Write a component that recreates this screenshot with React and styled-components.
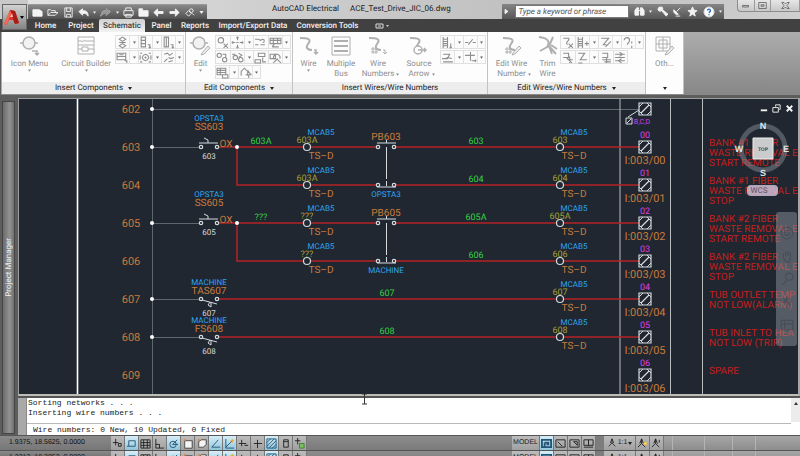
import React from "react";
import styled, { createGlobalStyle, css } from "styled-components";

const Global = createGlobalStyle`
  * { box-sizing: border-box; }
  html, body { margin: 0; height: 100%; }
  body { font-family: Roboto, "Open Sans", sans-serif; font-size: 8px; line-height: 10px; text-rendering: geometricPrecision; overflow: hidden; background: #6b6b6b; }
  button, input { font: inherit; color: inherit; text-rendering: inherit; margin: 0; padding: 0; border: 0; background: none; }
  svg { display: block; flex: none; }
`;

const Page = styled.div`
  height: 100vh;
  display: flex;
  flex-direction: column;
  background: #5e5f5e;
`;

/* ---------- header ---------- */

const Header = styled.header`
  display: grid;
  grid-template-columns: 28px 1fr;
  grid-template-rows: 19px 13px;
  background: linear-gradient(#c9c9c9 0 19px, #414141 19px);
`;

const AppButton = styled.button`
  grid-row: 1 / 3;
  margin: 4px 1px 2px 2px;
  display: flex;
  align-items: center;
  border: 1px solid #666;
  background: linear-gradient(#d2d2d2, #858585);
`;

const TitleBar = styled.div`
  display: flex;
  align-items: flex-start;
  background: linear-gradient(90deg, #e2e2e2, #cfcfcf 30%, #bebebe 70%, #cfcfcf);
`;

const QuickAccess = styled.div`
  width: 179px;
  height: 15px;
  margin-top: 4px;
  padding: 0 3px 0 4px;
  display: flex;
  align-items: center;
  justify-content: space-between;
  color: #f4f4f4;
  background: linear-gradient(#888, #505050);
  border-top: 1px solid #999;
`;

const IconButton = styled.button`
  display: flex;
  align-items: center;
  justify-content: center;
`;

const WindowTitle = styled.h1`
  flex: 1;
  display: flex;
  gap: 11px;
  margin: 3px 0 0 65px;
  font-size: 8px;
  line-height: 12px;
  font-weight: 400;
  color: #1c1c1c;
  white-space: nowrap;
`;

const SearchBar = styled.form`
  width: 222px;
  height: 15px;
  margin: 4px 13px 0 0;
  display: flex;
  align-items: center;
  justify-content: space-between;
  padding-right: 2px;
  color: #f4f4f4;
  background: linear-gradient(#858585, #565656);
`;

const SearchInput = styled.input`
  width: 114px;
  height: 13px;
  padding-left: 2px;
  border: 1px solid #777;
  background: #fdfdfd;
  color: #333;
  font-style: italic;
  &::placeholder { color: #555; opacity: 1; }
`;

const WindowControls = styled.div`
  width: 63px;
  height: 12px;
  display: flex;
  border: 1px solid #8c8c8c;
  border-top: 0;
  border-right: 0;
  border-radius: 0 0 0 4px;
  background: linear-gradient(#e6e6e6, #c8c8c8);
`;

const WindowButton = styled(IconButton)`
  width: ${(p) => p.$width}px;
  color: #555;
  border-right: 1px solid #9c9c9c;
`;

const Tabs = styled.nav`
  display: flex;
`;

const Tab = styled.button`
  width: ${(p) => p.$width}px;
  height: 13px;
  line-height: 13px;
  white-space: nowrap;
  font-weight: 500;
  color: ${(p) => (p.$active ? "#3c3c3c" : "#f2f2f2")};
  ${(p) => p.$active && css`
    border-radius: 2px 2px 0 0;
    background: linear-gradient(#d0d0d0, #f2f2f2);
  `}
`;

const RibbonToggle = styled(IconButton)`
  width: 38px;
`;

/* ---------- ribbon ---------- */

const Ribbon = styled.div`
  height: 63px;
  display: flex;
  margin-left: 1px;
  border-left: 1px solid #aaa;
  border-bottom: 1px solid #8a8a8a;
  background: linear-gradient(#adadad, #878787);
`;

const Panel = styled.section`
  width: ${(p) => p.$width}px;
  flex: none;
  display: flex;
  flex-direction: column;
  border-right: 1px solid #c2c2c2;
  background: #fdfdfd;
`;

const PanelBody = styled.div`
  flex: 1;
  display: flex;
  padding-top: 3px;
  color: #8f8f8f;
`;

const PanelTitle = styled.button`
  height: 12px;
  display: flex;
  align-items: center;
  justify-content: center;
  gap: 5px;
  color: #222;
  background: ${(p) => (p.$plain ? "#fdfdfd" : "#ededed")};
`;

const BigButtonBox = styled.button`
  width: ${(p) => p.$width}px;
  flex: none;
  display: flex;
  flex-direction: column;
  align-items: center;
  gap: 2px;
  line-height: 10px;
  white-space: nowrap;
`;

const BigLabel = styled.span`
  display: flex;
  flex-direction: column;
  align-items: center;
`;

const SideArrow = styled.span`
  display: flex;
  align-items: center;
  gap: 2px;
  margin-right: -5px;
`;

const ToolGrid = styled.div`
  display: flex;
  flex-direction: column;
  gap: 1px;
`;

const ToolRow = styled.div`
  display: flex;
`;

const ToolButton = styled.button`
  width: ${(p) => (p.$split ? 23 : 15)}px;
  height: 14px;
  display: flex;
  align-items: center;
  border: 1px solid #e0e0e0;
  border-right-width: 0;
  background: #fbfbfb;
  &:last-child { border-right-width: 1px; }
`;

const SplitArrow = styled.span`
  flex: 1;
  align-self: stretch;
  display: flex;
  align-items: center;
  justify-content: center;
  border-left: 1px solid #e4e4e4;
  color: #666;
`;

/* ---------- workspace ---------- */

const Workspace = styled.div`
  flex: 1;
  min-height: 0;
  display: grid;
  grid-template-columns: 18px 1fr;
  padding-top: 3px;
  background: #5c5d5c;
`;

const Palette = styled.aside`
  margin: 3px 3px 1px 2px;
  display: flex;
  align-items: center;
  justify-content: center;
  border: 1px solid #454545;
  background: linear-gradient(90deg, #6c6c6c, #929292 60%, #707070);
`;

const PaletteTitle = styled.span`
  writing-mode: vertical-rl;
  transform: rotate(180deg);
  color: #f0f0f0;
`;

const Main = styled.main`
  min-width: 0;
  display: flex;
  flex-direction: column;
`;

const Canvas = styled.div`
  position: relative;
  flex: 1;
  min-height: 0;
  overflow: hidden;
  border: 1px solid #9b9c9b;
  border-right: 2px solid #a5a6a5;
  border-bottom: 2px solid #bdbdb8;
  background: #202730;
`;

const Drawing = styled.svg`
  width: 100%;
  height: 100%;
  font-family: Roboto, sans-serif;
`;

const DocControls = styled.div`
  position: absolute;
  top: 4px;
  right: 3px;
  display: flex;
  gap: 2px;
  color: #f4f4f4;
`;

const ViewCube = styled.div`
  position: absolute;
  top: 18px;
  right: 6px;
`;

const WcsButton = styled.button`
  position: absolute;
  top: 86px;
  right: 20px;
  width: 31px;
  height: 11px;
  padding-right: 7px;
  border-radius: 4px;
  background: rgba(216, 200, 222, 0.8);
  color: #5d5264;
  line-height: 10px;
`;

const NavBar = styled.div`
  position: absolute;
  top: 113px;
  right: 1px;
  width: 21px;
  height: 134px;
  padding: 9px 0;
  display: flex;
  flex-direction: column;
  align-items: center;
  justify-content: space-around;
  border-radius: 3px;
  background: rgba(150, 158, 166, 0.45);
  color: rgba(60, 68, 76, 0.55);
`;

const CommandWindow = styled.section`
  height: 39px;
  display: grid;
  grid-template-columns: 8px 1fr 9px;
  border-top: 2px solid #555;
  background: #a9a9a9;
`;

const CommandText = styled.div`
  display: flex;
  flex-direction: column;
  border-left: 1px solid #888;
  background: #fff;
  color: #222;
  font-family: "Liberation Mono", monospace;
  font-size: 8px;
  text-rendering: auto;
`;

const LogLine = styled.p`
  margin: 0;
  padding-left: 1px;
  line-height: 10px;
  white-space: pre;
`;

const Prompt = styled.input`
  height: 12px;
  margin-top: 5px;
  padding-left: 6px;
  border-top: 1px solid #b9b9b9;
`;

const ScrollUp = styled(IconButton)`
  width: 100%;
  height: 24px;
  align-items: flex-start;
  padding-top: 4px;
  background: #ececec;
  color: #333;
`;

const Track = styled.div`
  background: #fff;
`;

const TextCursor = styled.svg`
  position: absolute;
  left: 342px;
  bottom: -9px;
`;

const CanvasWrap = styled.div`
  position: relative;
  flex: 1;
  min-height: 0;
  display: flex;
  flex-direction: column;
`;

/* ---------- status bar ---------- */

const StatusBox = styled.footer`
  height: ${(p) => p.$height}px;
  flex: none;
  overflow: hidden;
  display: flex;
  align-items: flex-start;
  border-top: 1px solid #555;
  background: linear-gradient(#8a8a8a, #777);
`;

const Coordinates = styled.output`
  width: 111px;
  padding-left: 9px;
  flex: none;
  line-height: 14px;
  font-family: "Liberation Sans", sans-serif;
  font-size: 7px;
  color: #111;
`;

const Toggle = styled.button`
  width: ${(p) => p.$width || 14}px;
  height: 14px;
  flex: none;
  display: flex;
  align-items: center;
  justify-content: center;
  gap: 1px;
  border-right: 1px solid #777;
  font-family: "Liberation Sans", sans-serif;
  font-size: 7px;
  color: ${(p) => (p.$on ? "#245575" : "#222")};
  background: ${(p) => (p.$on ? "linear-gradient(#d8eef8, #8fc4dd)" : "linear-gradient(#bcbcbc, #a0a0a0)")};
`;

const StatusFill = styled.div`
  flex: 1;
  height: 14px;
  background: linear-gradient(#8d8d8d, #7a7a7a);
`;

const StatusGap = styled.div`
  width: 8px;
  height: 14px;
  background: #7d7d7d;
`;

const Tray = styled.div`
  width: 136px;
  height: 14px;
  padding-left: 8px;
  display: flex;
  background: linear-gradient(#a6a6a6, #8d8d8d);
`;

const TraySlot = styled.div`
  width: ${(p) => p.$width}px;
  height: 14px;
  border-left: 1px solid #b4b4b4;
`;

/* ---------- icons ---------- */

const Arrow = ({ size = 4, up }) => (
  <svg width={size} height="3" viewBox="0 0 4 3" fill="currentColor" aria-hidden="true">
    <path d={up ? "M0 3h4L2 0z" : "M0 0h4L2 3z"} />
  </svg>
);

const Glyph = ({ d, size = 11, box = 12, width = 1, fill, children }) => (
  <svg width={size} height={size} viewBox={`0 0 ${box} ${box}`} fill="none" stroke="currentColor" strokeWidth={width} aria-hidden="true">
    {d && <path d={d} fill={fill ? "currentColor" : "none"} />}
    {children}
  </svg>
);

const small = {
  surge: "M3 3l3-2 3 2-3 2zM3 6h6M3 9l3-2 3 2-3 2z",
  panelDown: "M2 1h4v9H2zM2 4h4M2 7h4M8 8h2v3m-1-1l1 1 1-1",
  doorDown: "M2 1h4v9H2zM4 1v9M8 8h2v3m-1-1l1 1 1-1",
  listDown: "M1 2h8v6H1zM1 5h8M3 3.500h4M8 9h2v2",
  gear: "M1 2h2M9 2h2M1 10h2M9 10h2M1 4v4M11 4v4M6 3l2 1 1 2-1 2-2 1-2-1-1-2 1-2zM6 5v2M5 6h2",
  spark: "M2 3l3-1 2 2 3-2M2 10l3-3M6 6l2 1 3-1M6 10l4-1",
  erase: "M2 4a2.500 2.500 0 1 1 5 0a2.500 2.500 0 1 1-5 0M7 7l4 4M11 7l-4 4",
  move: "M6 1v3M6 8v3M1 6h3M8 6h3M5 2l1-1 1 1M5 10l1 1 1-1M2 5L1 6l1 1M10 5l1 1-1 1M5 6h2",
  chain: "M1 3h3l2 1 2-1M8 3a1.500 1.500 0 1 1 0 3M1 8h3M6 8h4",
  table: "M1 2h10v5H1zM1 4h10M4 2v5M8 2v5M3 10h6M5 7l-2 3",
  copy: "M1 4a2 2 0 1 1 4 0a2 2 0 1 1-4 0M6 3h3v3M6 8a2 2 0 1 1 4 0a2 2 0 1 1-4 0",
  swap: "M1 3h3M2 6a2 2 0 1 1 4 0a2 2 0 1 1-4 0M7 2l3 2-3 2M7 8a2 2 0 1 1 4 0a2 2 0 1 1-4 0",
  align: "M4 2h6v3H4zM1 8h5v3H1zM8 6v4h3",
  search: "M1 3h5v4H1zM5 8a3 3 0 1 1 5-1M7 7l4 4M4 11l4-4",
  grid: "M1 2h8v6H1zM1 4h8M1 6h8M4 2v6M6 8h5v3H6z",
  retag: "M2 9V5l3-3 3 3v4M8 4l3 4H6M9 8v3",
  ladder: "M2 1v10M6 1v10M2 3h4M2 5h4M2 7h4M2 9h4M9 7v4m-1-1l1 1 1-1",
  gap: "M1 6h3M8 6h3M4 8l4-5",
  bend: "M2 3h6L6 7H1M5 6l5 1M2 10h9",
  tee: "M1 4h9M6 1v8M7 9h4m-1-1l1 1-1 1",
  wave: "M2 2h5c2 2-4 4-1 6M7 7l4 4M11 7l-4 4",
  ladderAdd: "M2 1v10M6 1v10M2 3h4M2 5h4M2 7h4M2 9h4M8 7h4M10 5v4",
  brush: "M2 2h7L4 8h3M6 10l5-5",
  quest: "M2 4a2.500 2.500 0 1 1 5 0c0 2-2 2-2 4M9 5v2M9 9v2",
  fix: "M2 2h5v4H2M5 6l5 5M6 8h5M8 5v6",
  zig: "M2 2h6L4 8h6M2 11h4",
  flip: "M3 2h5v4H3M3 8h8M5 10h6M7 6v5",
  rows: "M1 3h9M1 6h9M1 9h9M5 1l3 2-3 2M7 7l-3 2 3 2",
};

const BigIcon = ({ children }) => (
  <svg width="22" height="22" viewBox="0 0 22 22" fill="none" stroke="#b0b0b0" strokeWidth="1.500" aria-hidden="true">
    {children}
  </svg>
);

const pencil = <path d="M12 18l6-7 2 2-6 6-3 1z" fill="#eee" strokeWidth="1" />;
const curve = <path d="M2 3c8 0 12 1 8 6-3 4 0 6 4 6" strokeWidth="2" />;

const big = {
  menu: <BigIcon><circle cx="10" cy="8" r="6" fill="#f2f2f2" /><path d="M1 8h3M16 8h3M13 16h5v4m-2-2l2 2 2-2" /></BigIcon>,
  builder: <BigIcon><path d="M3 2h16v17H3zM3 10h16M3 6h4m3 0h9M7 7l3-2M3 14h4m6 0h6M7 12h6v4H7z" strokeWidth="1" /></BigIcon>,
  edit: <BigIcon><circle cx="9" cy="8" r="6" fill="#f2f2f2" /><path d="M0 8h3M15 8h3" />{pencil}</BigIcon>,
  wire: <BigIcon>{curve}<path d="M16 15h2v4m-2-2l2 2 2-2" /></BigIcon>,
  bus: <BigIcon><path d="M2 2h18v18H2z" strokeWidth="1" /><path d="M4 6h14M4 11h14M4 16h14" strokeWidth="2" /></BigIcon>,
  numbers: <BigIcon>{curve}<path d="M6 12v7M9 12v7M4 14h7M4 17h7M16 15h2v4m-2-2l2 2 2-2" strokeWidth="1" /></BigIcon>,
  source: <BigIcon>{curve}<circle cx="10" cy="15" r="4" fill="#fff" /><path d="M10 15h8m-2-2l2 2-2 2" /></BigIcon>,
  editWire: <BigIcon>{curve}<path d="M6 12v7M9 12v7M4 14h7M4 17h7" strokeWidth="1" />{pencil}</BigIcon>,
  trim: <BigIcon><path d="M2 2c8 1 12 4 8 10" strokeWidth="2" /><path d="M16 2l-4 9 7 8M12 11l3 8M12 11l-9 5M14 10l6 4" strokeWidth="2" /></BigIcon>,
  other: <BigIcon><path d="M2 2h14v14H2zM9 2v14M2 9h14M5 5h8v8H5z" strokeWidth="1" />{pencil}</BigIcon>,
};

const quick = [
  ["New", "M1 3h7l3 2v5H1z", 1],
  ["Open", "M1 9V3h3l1 1h4v2M1 9l3-3h8L9 9z"],
  ["Save", "M2 1h8v10H2zM4 1v4h4V1M4 11V8h4v3"],
  ["Undo", "M1 5l4-3v2c4 0 6 1 6 6-1-3-3-3-6-3v2z", 1],
  ["Undo list", "", 2],
  ["Redo", "M11 5L7 2v2C3 4 2 5 1 10c1-3 3-3 6-3v2z", 3],
  ["Redo list", "", 2],
  ["Plot", "M3 4V1h6v3M1 4h10v5H1zM3 8h6v3H3z"],
  ["Project", "M1 2h4v2h6v6H1z", 1],
  ["Previous drawing", "M1 6l4-4v3h6v2H5v3z", 1],
  ["Next drawing", "M11 6L7 2v3H1v2h6v3z", 1],
  ["Surf", "M2 7l3-3 3 3-3 3zM6 4a2 2 0 1 1 4 0a2 2 0 1 1-4 0M9 7l2 2"],
  ["Customize", "", 4],
];

const searchIcons = [
  ["Find", "M1 10V5l2-3h2v8zM7 10V2h2l2 3v5zM5 5h2", 1],
  ["Find options", null],
  ["Subscription", "M2 2l3 3M4 1a3 3 0 0 0-3 3c1 2 3 2 4 1l5 6 2-2-6-5c1-2 0-3-2-3z", 1],
  ["Communication", "M2 4l5 5c-2 1-6-1-5-5zM5 6l4-4M4 11h5", 1],
  ["Favorites", "M6 1l1.500 3.500 3.500.5-3 2.500 1 3.500-3-2-3 2 1-3.500-3-2.500 3.500-.5z", 1],
];

/* ---------- parts ---------- */

const BigButton = ({ icon, lines, width, arrow }) => (
  <BigButtonBox $width={width} aria-label={lines.join(" ")}>
    {big[icon]}
    <BigLabel>
      {lines.map((l, i) =>
        arrow === "side" && i === lines.length - 1 ? (
          <SideArrow key={l}>{l}<Arrow size={3} /></SideArrow>
        ) : (
          <span key={l}>{l}</span>
        )
      )}
      {arrow === "below" && <Arrow size={3} />}
    </BigLabel>
  </BigButtonBox>
);

const Tools = ({ rows }) => (
  <ToolGrid>
    {rows.map((row, i) => (
      <ToolRow key={i}>
        {row.split(" ").map((name) => {
          const split = name.endsWith("+");
          const key = name.replace("+", "");
          return (
            <ToolButton key={name} $split={split} aria-label={key}>
              <Glyph d={small[key]} size={13} />
              {split && <SplitArrow><Arrow size={3} /></SplitArrow>}
            </ToolButton>
          );
        })}
      </ToolRow>
    ))}
  </ToolGrid>
);

const Txt = ({ x, y, c, s = 11, anchor = "middle", children }) => (
  <text x={x} y={y} fill={c} fontSize={s} textAnchor={anchor}>{children}</text>
);

const ORANGE = "#c97b3c", BLUE = "#2fa5f0", GREEN = "#35d243", OLIVE = "#a5a03a", MAGENTA = "#dc3fe4", RED = "#c4201e", WIRE = "#b32425", PALE = "#d4dade", DIM = "#5d676e";

const Terminal = ({ x, y, label }) => (
  <g>
    <Txt x={x} y={y - 4} c={OLIVE} s={9}>{label}</Txt>
    <circle cx={x} cy={y} r="3.500" fill="#202730" stroke={PALE} strokeWidth="1.200" />
    <Txt x={x + 14} y={y - 12} c={BLUE} s={8}>MCAB5</Txt>
    <Txt x={x + 14} y={y + 12} c={ORANGE} s={10}>TS–D</Txt>
  </g>
);

const Contacts = ({ x, y }) => (
  <g fill="#202730" stroke={PALE} strokeWidth="1.200">
    <circle cx={x - 8} cy={y} r="1.700" /><circle cx={x + 8} cy={y} r="1.700" />
  </g>
);

const Selector = ({ y, n }) => (
  <g>
    <path d={`M219 ${y}h18v38h141M237 ${y}h141`} stroke={WIRE} strokeWidth="1.500" fill="none" />
    <path d={`M199 ${y - 4}h19M208 ${y - 4}v-3l-4-2`} stroke={PALE} fill="none" />
    <Contacts x={209} y={y} />
    <circle cx="237" cy={y} r="2" fill="#fff" />
    <Txt x={209} y={y - 26} c={BLUE} s={8}>OPSTA3</Txt>
    <Txt x={209} y={y - 17} c={ORANGE} s={10}>SS{n}</Txt>
    <Txt x={226} y={y} c={ORANGE} s={10}>OX</Txt>
    <Txt x={209} y={y + 12} c={PALE} s={8}>{n}</Txt>
  </g>
);

const PushButton = ({ y, n, station }) => (
  <g>
    <path d={`M377 ${y - 4}h19M386.500 ${y - 7}v3M386.500 ${y}v32M386.500 ${y + 34}v5M377 ${y + 40}h19`} stroke={PALE} />
    <Contacts x={386} y={y} /><Contacts x={386} y={y + 38} />
    <Txt x={386} y={y - 7} c={ORANGE} s={10}>PB{n}</Txt>
    <Txt x={386} y={y + 50} c={BLUE} s={8}>{station}</Txt>
  </g>
);

const Switch = ({ y, n, tag }) => (
  <g>
    <path d={`M219 ${y}h421`} stroke={WIRE} strokeWidth="1.500" />
    <path d={`M202 ${y + 1}l15 4M210 ${y + 3}l-2 3 3 2v-4`} stroke={PALE} fill="none" />
    <Contacts x={209} y={y} />
    <Txt x={209} y={y - 14} c={BLUE} s={8}>MACHINE</Txt>
    <Txt x={209} y={y - 5} c={ORANGE} s={10}>{tag}</Txt>
    <Txt x={209} y={y + 17} c={PALE} s={8}>{n}</Txt>
    <Txt x={387} y={y - 3} c={GREEN} s={9}>{n}</Txt>
    <Terminal x={560} y={y} label={n} />
  </g>
);

const Module = ({ y, n }) => (
  <g>
    <path d={`M639 ${y - 6}h12v12h-12zM641 ${y + 4}l8-8`} fill="#202730" stroke={PALE} strokeWidth="1.200" />
    <path d={`M639 ${y - 2}l4-4M647 ${y - 6}l4 4M651 ${y + 2}l-4 4M643 ${y + 6}l-4-4`} fill="none" stroke={PALE} />
    {n && <Txt x={645} y={y - 9} c={MAGENTA} s={9}>{n}</Txt>}
    {n && <Txt x={645} y={y + 17} c={ORANGE}>I:003/{n}</Txt>}
  </g>
);

const notes = [
  [147, ["BANK #1 FIBER", "WASTE REMOVAL E", "START REMOTE"]],
  [185, ["BANK #1 FIBER", "WASTE REMOVAL E", "STOP"]],
  [223, ["BANK #2 FIBER", "WASTE REMOVAL E", "START REMOTE"]],
  [261, ["BANK #2 FIBER", "WASTE REMOVAL E", "STOP"]],
  [299, ["TUB OUTLET TEMP", "NOT LOW(ALARM)"]],
  [337, ["TUB INLET TO HEA", "NOT LOW (TRIP)"]],
  [375, ["SPARE"]],
];

const rungs = [602, 603, 604, 605, 606, 607, 608, 609];
const wireNumbers = [
  [261, 144, "603A"], [261, 220, "???"], [476, 144, "603"], [476, 182, "604"], [476, 220, "605A"], [476, 258, "606"],
];

const Schematic = () => (
  <Drawing viewBox="19 99 779 295" preserveAspectRatio="xMinYMin slice" role="img" aria-label="Ladder schematic">
    <path d="M77.500 99v400" stroke="#fff" strokeWidth="1.600" />
    <path d="M152.500 99v400M152 109.500h487M152 147.500h47M152 223.500h47M152 299.500h47M152 337.500h47" stroke={DIM} />
    <path d="M620 99v400M670.500 99v400M702.500 99v400" stroke="#b9bdc0" />
    {rungs.map((n, i) => <Txt key={n} x={131} y={113 + i * 38} c={ORANGE}>{n}</Txt>)}
    {[109, 147, 223, 299, 337].map((y) => <circle key={y} cx="152" cy={y} r="2" fill="#fff" />)}
    <path d="M394 147h246M394 185h246M394 223h246M394 261h246" stroke={WIRE} strokeWidth="1.500" />
    <Selector y={147} n="603" /><Selector y={223} n="605" />
    <PushButton y={147} n="603" station="OPSTA3" /><PushButton y={223} n="605" station="MACHINE" />
    <Switch y={299} n={607} tag="TAS607" /><Switch y={337} n={608} tag="FS608" />
    <Terminal x={307} y={147} label="603A" /><Terminal x={307} y={185} label="603A" />
    <Terminal x={307} y={223} label="???" /><Terminal x={307} y={261} label="???" />
    <Terminal x={560} y={147} label="603" /><Terminal x={560} y={185} label="604" />
    <Terminal x={560} y={223} label="605A" /><Terminal x={560} y={261} label="606" />
    {wireNumbers.map(([x, y, t]) => <Txt key={`${x}-${y}`} x={x} y={y} c={GREEN} s={9}>{t}</Txt>)}
    <Module y={109} />
    <path d="M626 118h6v6h-6zM627 123l4-4M628 117l11-7" fill="none" stroke={PALE} />
    <Txt x={642} y={124} c={MAGENTA} s={7}>B,C,D</Txt>
    {["00", "01", "02", "03", "04", "05", "06"].map((n, i) => <Module key={n} y={147 + i * 38} n={n} />)}
    {notes.map(([y, lines]) => lines.map((l, i) => (
      <Txt key={l + y} x={709} y={y - 1 + i * 10} c={RED} s={10} anchor="start">{l}</Txt>
    )))}
  </Drawing>
);

const Compass = () => (
  <svg width="58" height="62" viewBox="734 117 58 62" fontFamily="Liberation Sans, sans-serif" textAnchor="middle" fontWeight="700" fill="#dfe3e6" role="img" aria-label="View cube">
    <circle cx="763" cy="148" r="22" fill="none" stroke="#848c94" strokeOpacity=".5" strokeWidth="5" />
    <path d="M753 138h20v21h-20z" fill="#c9cbcd" stroke="#eee" />
    <text x="763" y="151" fontSize="5" fill="#4a4a4a">TOP</text>
    <text x="763" y="129" fontSize="9">N</text>
    <text x="763" y="176" fontSize="9">S</text>
    <text x="739" y="152" fontSize="9">W</text>
    <text x="786" y="152" fontSize="9">E</text>
  </svg>
);

const toggles = [
  ["Infer", "M4 1v7M1 5h6M7 6h3v3H7z"],
  ["Snap", "M3 3h7v6H3zM1 9h2", 1],
  ["Grid", "M1 2h10v9H1zM1 5h10M1 8h10M4 2v9M8 2v9"],
  ["Ortho", "M2 1v10h9M2 7h4v4"],
  ["Polar", "M2 7a3.500 3.500 0 1 1 7 0a3.500 3.500 0 1 1-7 0M5 7l5-5M5 7h6", 1],
  ["Object snap", "M3 3h8v8H3z", 0, "#f5f5f5"],
  ["3D snap", "M3 9V4l3-2h5v5l-3 3H3z", 0, "#f5f5f5"],
  ["Tracking", "M9 2L2 10h9", 1],
  ["Dynamic UCS", "M2 1v10h9M2 10l7-7", 1],
  ["Dynamic input", "M4 2v7M1 6h8M7 8h4"],
  ["Lineweight", "M6 2v9M2 6h9"],
  ["Transparency", "M1 1h10v10H1zM1 5l4-4M1 9l8-8M3 11l8-8M7 11l4-4", 1],
  ["Quick properties", "M4 2h5v8H4zM4 4h5"],
  ["Selection cycling", "M4 0v7M1 3h6", 0, "green"],
];

const models = [
  ["Model", "M1 2h10v8H1zM4 5h5M4 5v4M6 7h3", 1],
  ["Layout", "M1 2h10v8H1zM3 4l5 5"],
  ["Quick layouts", "M1 2h10v8H1zM5 4l4 4V4z"],
  ["Quick drawings", "M1 2h5v6H1zM6 2h5v6H6zM1 10h10"],
];

const StatusBar = ({ height, coords, hidden }) => (
  <StatusBox $height={height} aria-hidden={hidden}>
    <Coordinates>{coords}</Coordinates>
    {toggles.map(([label, d, on, extra]) => (
      <Toggle key={label} aria-label={label} $on={on}>
        <Glyph d={d} size={11}>
          {extra && extra !== "green" && <><path d={d} fill={extra} stroke="#666" /><path d="M2 2h2" stroke="#e28a4c" strokeWidth="2" /></>}
          {extra === "green" && <path d="M6 6h5v5H6z" fill="#77c163" stroke="#3d7e31" />}
          {label === "Dynamic UCS" && <path d="M9 1v4M7 3h4" stroke="#e7a72b" />}
        </Glyph>
      </Toggle>
    ))}
    <StatusFill />
    <Toggle $width={28}>MODEL</Toggle>
    {models.map(([label, d, on]) => (
      <Toggle key={label} aria-label={label} $on={on}><Glyph d={d} width={on ? 2 : 1} /></Toggle>
    ))}
    <StatusGap />
    <Toggle $width={32}>
      <Glyph d="M6 1v5L2 10M6 6l4 4M4 6l2-5 2 5" size={10} />1:1<Arrow />
    </Toggle>
    <Toggle aria-label="Annotation visibility">
      <Glyph d="M5 1v5L1 10M5 6l4 4M3 6l2-5 2 5"><circle cx="9" cy="6" r="1.500" fill="#ffe477" stroke="#eab52f" /></Glyph>
    </Toggle>
    <Toggle aria-label="Auto scale"><Glyph d="M5 1v5L1 10M5 6l4 4M3 6l2-5 2 5M9 2v3" /></Toggle>
    <Tray>
      <TraySlot $width={32} /><TraySlot $width={28} /><TraySlot $width={23} /><TraySlot $width={34} />
    </Tray>
  </StatusBox>
);

const tabs = [
  ["Home", 35], ["Project", 36], ["Schematic", 46], ["Panel", 33], ["Reports", 34], ["Import/Export Data", 82], ["Conversion Tools", 67],
];

export default function App() {
  return (
    <Page>
      <Global />
      <Header>
        <AppButton aria-label="Application menu">
          <svg width="17" height="20" viewBox="0 0 17 20" aria-hidden="true">
            <path d="M1 17L7 3l5 1 4 12-4 1-2-4H6l-2 5z" fill="#d93a2b" />
            <path d="M7 3l5 1 4 12-4 1z" fill="#a91c16" /><path d="M7 10l2-4 1 4z" fill="#f4c1b6" />
            <path d="M1 17L7 3l1 3-4 12z" fill="#f06a55" />
          </svg>
          <Arrow />
        </AppButton>
        <TitleBar>
          <QuickAccess>
            {quick.map(([label, d, kind]) => (
              <IconButton key={label} aria-label={label}>
                {d ? (
                  <Glyph d={d} fill={kind === 1 || kind === 3} size={11}>
                    {kind === 3 && <path d={d} fill="#999" stroke="#888" />}
                  </Glyph>
                ) : <Arrow size={kind === 4 ? 5 : 3} />}
              </IconButton>
            ))}
          </QuickAccess>
          <WindowTitle><span>AutoCAD Electrical</span><span>ACE_Test_Drive_JIC_06.dwg</span></WindowTitle>
          <SearchBar onSubmit={(e) => e.preventDefault()}>
            <IconButton type="button" aria-label="Collapse search">
              <Glyph d="M4 3l4 3-4 3z" fill size={9} />
            </IconButton>
            <SearchInput aria-label="Search help" placeholder="Type a keyword or phrase" />
            {searchIcons.map(([label, d, fill]) => (
              <IconButton type="button" key={label} aria-label={label}>
                {d ? <Glyph d={d} fill={fill} /> : <Arrow size={3} />}
              </IconButton>
            ))}
            <IconButton type="button" aria-label="Help">
              <svg width="12" height="12" viewBox="0 0 12 12" aria-hidden="true">
                <circle cx="6" cy="6" r="5" fill="#fff" stroke="#ddd" />
                <path d="M4.500 4.500a1.500 1.500 0 1 1 2 1.500L6 7M6 8.300v1" fill="none" stroke="#2868b8" strokeWidth="1.400" />
              </svg>
            </IconButton>
            <IconButton type="button" aria-label="Help options"><Arrow size={3} /></IconButton>
          </SearchBar>
          <WindowControls>
            <WindowButton $width={17} aria-label="Minimize"><Glyph d="M2 6h8v2H2z" size={9} /></WindowButton>
            <WindowButton $width={17} aria-label="Restore"><Glyph d="M1 2h10v8H1zM4 5h4v2H4z" size={9} /></WindowButton>
            <WindowButton $width={29} aria-label="Close"><Glyph d="M1 2h3l2 2 2-2h3L8 6l3 4H8L6 8l-2 2H1l3-4z" size={9} /></WindowButton>
          </WindowControls>
        </TitleBar>
        <Tabs>
          {tabs.map(([label, width]) => (
            <Tab key={label} $width={width} $active={label === "Schematic"}>{label}</Tab>
          ))}
          <RibbonToggle aria-label="Ribbon display">
            <svg width="18" height="6" viewBox="0 0 18 6" aria-hidden="true">
              <path d="M5 1h7v4H5zM7 3h3" fill="none" stroke="#ddd" /><path d="M15 2h3l-1.500 2z" fill="#ccc" />
            </svg>
          </RibbonToggle>
        </Tabs>
      </Header>

      <Ribbon>
        <Panel $width={184}>
          <PanelBody>
            <BigButton icon="menu" lines={["Icon Menu"]} width={55} arrow="below" />
            <BigButton icon="builder" lines={["Circuit Builder"]} width={58} arrow="below" />
            <Tools rows={["surge+ panelDown+ doorDown+", "listDown+ gear+ spark+"]} />
          </PanelBody>
          <PanelTitle>Insert Components <Arrow /></PanelTitle>
        </Panel>
        <Panel $width={107}>
          <PanelBody>
            <BigButton icon="edit" lines={["Edit"]} width={29} arrow="below" />
            <Tools rows={["erase move+ chain table+", "copy swap+ align search+", "grid+ retag+"]} />
          </PanelBody>
          <PanelTitle>Edit Components <Arrow /></PanelTitle>
        </Panel>
        <Panel $width={195}>
          <PanelBody>
            <BigButton icon="wire" lines={["Wire"]} width={31} arrow="below" />
            <BigButton icon="bus" lines={["Multiple", "Bus"]} width={34} />
            <BigButton icon="numbers" lines={["Wire", "Numbers"]} width={40} arrow="side" />
            <BigButton icon="source" lines={["Source", "Arrow"]} width={42} arrow="side" />
            <Tools rows={["ladder+ gap+", "bend+ tee+"]} />
          </PanelBody>
          <PanelTitle>Insert Wires/Wire Numbers</PanelTitle>
        </Panel>
        <Panel $width={158}>
          <PanelBody>
            <BigButton icon="editWire" lines={["Edit Wire", "Number"]} width={47} arrow="side" />
            <BigButton icon="trim" lines={["Trim", "Wire"]} width={25} />
            <Tools rows={["wave ladderAdd+ brush+ quest+", "fix zig+ flip rows"]} />
          </PanelBody>
          <PanelTitle>Edit Wires/Wire Numbers <Arrow /></PanelTitle>
        </Panel>
        <Panel $width={38}>
          <PanelBody>
            <BigButton icon="other" lines={["Oth..."]} width={37} />
          </PanelBody>
          <PanelTitle $plain aria-label="More panels"><Arrow /></PanelTitle>
        </Panel>
      </Ribbon>

      <Workspace>
        <Palette><PaletteTitle>Project Manager</PaletteTitle></Palette>
        <Main>
          <CanvasWrap>
            <Canvas>
              <Schematic />
              <DocControls>
                <IconButton aria-label="Minimize drawing"><Glyph d="M3 8h7" width={2} /></IconButton>
                <IconButton aria-label="Restore drawing"><Glyph d="M2 5h6v5H2zM5 4V2h5v5H9" width={1} /></IconButton>
                <IconButton aria-label="Close drawing"><Glyph d="M3 3l6 6M9 3l-6 6" width={2} /></IconButton>
              </DocControls>
              <ViewCube><Compass /></ViewCube>
              <WcsButton>WCS</WcsButton>
              <NavBar>
                <Glyph size={14} d="M1 6a5 5 0 1 1 10 0a5 5 0 1 1-10 0M4 6a2 2 0 1 1 4 0a2 2 0 1 1-4 0" />
                <Glyph size={14} d="M3 7V4M5 6V2M7 6V2M9 7V3M3 7l2 4h3l1-4" />
                <Glyph size={14} d="M5 4a3 3 0 1 1 6 0a3 3 0 1 1-6 0M6 7l-4 4" />
                <Glyph size={14} d="M6 1v10M1 6h10M3 3l6 6" />
                <Glyph size={14} d="M1 2h10v8H1zM1 5h10M4 2v8" />
              </NavBar>
            </Canvas>
            <TextCursor width="9" height="12" viewBox="0 0 9 12" aria-hidden="true">
              <path d="M2 1h2l.5.5L5 1h2M4.500 1v10M2 11h5" stroke="#333" fill="none" />
            </TextCursor>
          </CanvasWrap>
          <CommandWindow>
            <div />
            <CommandText>
              <LogLine>Sorting networks . . .</LogLine>
              <LogLine>Inserting wire numbers . . .</LogLine>
              <Prompt aria-label="Command line" defaultValue="Wire numbers: 0 New, 10 Updated, 0 Fixed" />
            </CommandText>
            <Track><ScrollUp aria-label="Scroll up"><Arrow up /></ScrollUp></Track>
          </CommandWindow>
        </Main>
      </Workspace>
      <StatusBar height={15} coords="1.9375, 18.5625, 0.0000" />
      <StatusBar height={6} coords="1.2212, 18.2052, 0.0000" hidden />
    </Page>
  );
}
